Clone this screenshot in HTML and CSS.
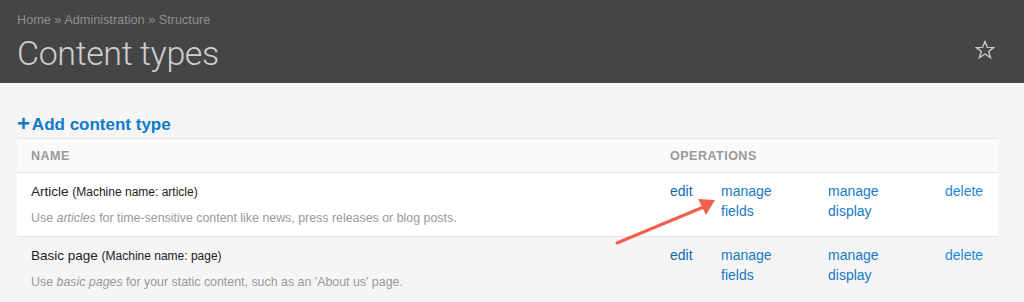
FILE: index.html
```html
<!DOCTYPE html>
<html lang="en">
<head>
    <meta charset="UTF-8">
    <meta name="viewport" content="width=device-width, initial-scale=1.0">
    <title>Content types</title>
    <link rel="stylesheet" href="styles.css">
</head>
<body>

<!-- Page header -->
<div class="page-header">
    <div class="breadcrumb">
        <a href="#">Home</a> &raquo; <a href="#">Administration</a> &raquo; <a href="#">Structure</a>
    </div>
    <h1>Content types</h1>
    <svg class="star" width="20" height="20" viewBox="0 0 20 20">
        <polygon points="10,1.5 12.4,7.4 18.6,7.6 13.7,11.5 15.5,17.6 10,14 4.5,17.6 6.3,11.5 1.4,7.6 7.6,7.4" fill="none" stroke="#c8c8c8" stroke-width="1.4" stroke-linejoin="miter"/>
    </svg>
</div>

<div class="content">
    <a class="add-link" href="#"><span class="plus">+</span>Add content type</a>

    <table class="types">
        <thead>
            <tr>
                <th class="col-name">Name</th>
                <th>Operations</th>
            </tr>
        </thead>
        <tbody>
            <tr class="odd">
                <td>
                    <div class="type-name">Article <small>(Machine name: article)</small></div>
                    <div class="type-desc">Use <em>articles</em> for time-sensitive content like news, press releases or blog posts.</div>
                </td>
                <td>
                    <ul class="ops">
                        <li class="op-edit"><a href="#">edit</a></li>
                        <li class="op-fields"><a href="#">manage fields</a></li>
                        <li class="op-display"><a href="#">manage display</a></li>
                        <li><a href="#">delete</a></li>
                    </ul>
                </td>
            </tr>
            <tr class="even">
                <td>
                    <div class="type-name">Basic page <small>(Machine name: page)</small></div>
                    <div class="type-desc">Use <em>basic pages</em> for your static content, such as an 'About us' page.</div>
                </td>
                <td>
                    <ul class="ops">
                        <li class="op-edit"><a href="#">edit</a></li>
                        <li class="op-fields"><a href="#">manage fields</a></li>
                        <li class="op-display"><a href="#">manage display</a></li>
                        <li><a href="#">delete</a></li>
                    </ul>
                </td>
            </tr>
        </tbody>
    </table>

    <!-- annotation arrow -->
    <svg class="arrow" width="120" height="60" viewBox="0 0 120 60">
        <line x1="3" y1="55" x2="92" y2="18" stroke="#f0604f" stroke-width="3" stroke-linecap="round"/>
        <polygon points="101,12 84,11 92,27" fill="#f0604f"/>
    </svg>
</div>

</body>
</html>
```

FILE: styles.css
```css
body { margin: 0; background-color: #f5f5f5; font-family: "Liberation Sans", Arial, sans-serif; color: #222; }
a { text-decoration: none; }

.page-header { position: relative; background-color: #454545; height: 83px; padding: 13px 17px 0; box-sizing: border-box; }
.breadcrumb { font-size: 12.7px; color: #8e8e8e; line-height: 14px; }
.breadcrumb a { color: #8e8e8e; }
h1 { margin: 5px 0 0; font-family: Roboto, "Liberation Sans", sans-serif; font-weight: 300; font-size: 34px; line-height: 42px; color: #cfcfcf; letter-spacing: -0.4px; }
.star { position: absolute; right: 29px; top: 40px; }

.content { position: relative; padding: 30px 26px 0 17px; }
.add-link { display: inline-block; font-size: 17px; font-weight: bold; color: #0d7ac9; line-height: 20px; margin-bottom: 3px; }
.plus { font-size: 22px; margin-right: 2px; position: relative; top: 1px; }

.types { width: 100%; border-collapse: collapse; table-layout: fixed; }
.types th { text-align: left; font-size: 12.5px; font-weight: bold; text-transform: uppercase; color: #999; letter-spacing: 0.5px; padding: 0 14px; height: 33px; background-color: #fafafa; border-top: 1px solid #e2e2e2; border-bottom: 1px solid #e2e2e2; }
.types th.col-name { width: 611px; }
.types td { vertical-align: top; padding: 10px 14px 10px; }
.types tr.odd td { background-color: #fff; border-bottom: 1px solid #e2e2e2; }
.types tr.even td { background-color: #f5f5f5; padding-top: 10px; }

.type-name { font-size: 13.5px; line-height: 17px; color: #222; }
.type-name small { font-size: 12px; }
.type-desc { margin-top: 9px; font-size: 12.4px; line-height: 16px; color: #999; }

.ops { list-style: none; margin: 0; padding: 0; display: flex; }
.ops li { font-size: 14px; line-height: 20px; margin-top: -2px; }
.ops a { color: #1c88d6; }
.op-edit { width: 51px; }
.op-edit a { color: #0b6ab0; }
.op-fields { width: 107px; }
.op-display { width: 117px; }
.op-fields a, .op-display a { display: block; width: 56px; color: #1a79c2; }

.arrow { position: absolute; left: 614px; top: 105px; }
```
